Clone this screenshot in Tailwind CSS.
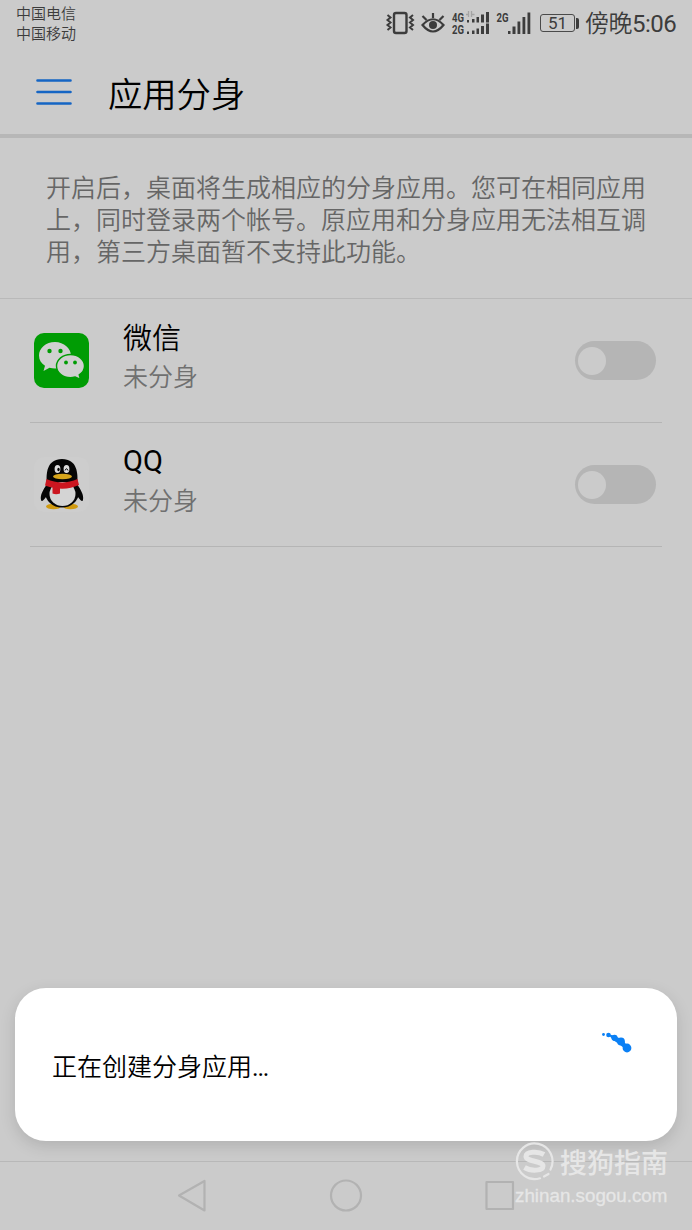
<!DOCTYPE html>
<html lang="zh-CN">
<head>
  <meta charset="utf-8"/>
  <title>应用分身</title>
  <script src="https://cdn.jsdelivr.net/npm/@tailwindcss/browser@4"></script>
  <style>
    body { font-family: Roboto, 'Noto Sans CJK SC', sans-serif; }
  </style>
</head>
<body class="bg-[#cbcbcb]">
  <div class="relative flex flex-col w-[692px] h-[1230px] overflow-hidden text-black">

    <!-- Status bar -->
    <div class="flex justify-between h-12 pl-4 pr-[15px] text-[#3c3c3c]">
      <div class="pt-1 text-[15px] leading-5 font-[350]">
        <p>中国电信</p>
        <p>中国移动</p>
      </div>
      <div class="flex items-center">
        <svg class="w-[154px] h-12" viewBox="384 0 154 48" fill="none" stroke="#3c3c3c">
          <rect x="394" y="13" width="12.5" height="20" rx="2" stroke-width="2.4"/>
          <path d="M387.5 15l3 2.5-3 2.5 3 2.5-3 2.5 3 2.5-3 2.5M413 15l-3 2.5 3 2.5-3 2.5 3 2.5-3 2.5 3 2.5" stroke-width="2"/>
          <path d="M422.500 25q10.500-11.500 21 0q-10.500 13-21 0zM433 18v-5M426.500 20l-4-4M439.500 20l4-4" stroke-width="2.200"/>
          <circle cx="433" cy="25" r="4" fill="#3c3c3c" stroke="none"/>
          <g fill="#3c3c3c" stroke="none">
            <path d="M467 20h2v2.500h-2zM472 19h2.500v3.500h-2.500zM476.500 17h2.500v5.500h-2.500zM481 14.500h3v8h-3zM486 12h3v10.500h-3z"/>
            <path d="M467 31.500h2v2.500h-2zM472 30.500h2.500v3.500h-2.500zM476.500 28.500h2.500v5.500h-2.500zM481 26h3v8h-3zM486 23.500h3v10.500h-3z"/>
            <path d="M508 31h2.500v3h-2.500zM512.500 26.500h3v7.500h-3zM517.500 21.500h2.800v12.500h-2.800zM522.500 17h2.800v17h-2.800zM527.500 12.500h2.800v21.500h-2.800z"/>
            <g font-family="Roboto" font-weight="700" font-size="12.500">
              <text x="452" y="22" textLength="12" lengthAdjust="spacingAndGlyphs">4G</text>
              <text x="452" y="34" textLength="12" lengthAdjust="spacingAndGlyphs">2G</text>
              <text x="496.500" y="21.500" textLength="12" lengthAdjust="spacingAndGlyphs">2G</text>
            </g>
          </g>
          <path d="M466 14.500h3M468.500 11v6M471.500 11v6M471.500 14.500h3" stroke="#a4a4a4" stroke-width="1.300"/>
        </svg>
        <div class="flex items-center ml-0.5 -mt-[2px]">
          <span class="w-[35px] h-[18px] rounded-[3px] border border-[#4a4a4a] text-[17px] leading-[17px] text-center">51</span>
          <span class="w-[3px] h-[11px] ml-px rounded-r-xs bg-[#3c3c3c]"></span>
        </div>
        <span class="w-[92px] ml-[6px] text-[24px] tracking-[-0.5px] font-[350] whitespace-nowrap">傍晚<span class="font-normal">5:06</span></span>
      </div>
    </div>

    <!-- Title bar -->
    <div class="flex items-center h-[90px] pl-9 pt-0.5 border-b-4 border-[#b7b7b7]">
      <svg class="w-9 h-7" viewBox="0 0 36 28" stroke="#1565c4" stroke-width="2.600" stroke-linecap="round">
        <path d="M1.500 2.500h33M1.500 14h33M1.500 25.500h33"/>
      </svg>
      <h1 class="ml-9 pt-[6px] text-[34.3px] leading-none font-[350]">应用分身</h1>
    </div>

    <!-- Description -->
    <p class="h-[161px] pt-[35px] pl-[46px] pr-[44px] border-b border-[#b9b9b9] text-[25px] leading-8 font-[350] text-[#666]">开启后，桌面将生成相应的分身应用。您可在相同应用<br/>上，同时登录两个帐号。原应用和分身应用无法相互调<br/>用，第三方桌面暂不支持此功能。</p>

    <!-- App list -->
    <ul class="mx-[30px]">
      <li class="flex items-center h-[124px] pl-1 pr-[6px] border-b border-[#b5b5b5]">
        <svg class="w-[55px] h-[55px]" viewBox="0 0 55 55">
          <rect width="55" height="55" rx="10" fill="#009c04"/>
          <path d="M21 9C12 9 5 15 5 22.500c0 4.500 2.300 8 6 10.300L9.500 38l6-3.300c1.800.5 3.500.8 5.500.8 9 0 16-6 16-13S30 9 21 9z" fill="#d0d0d0"/>
          <path d="M36.500 21.500c-7.800 0-14 5.200-14 11.600s6.200 11.600 14 11.600c1.600 0 3.200-.3 4.700-.7l5.300 2.500-1.300-4.600c3.300-2.100 5.300-5.300 5.300-8.800 0-6.400-6.200-11.600-14-11.600z" fill="#d0d0d0" stroke="#009c04" stroke-width="1.400"/>
          <g fill="#009c04">
            <circle cx="15.500" cy="18" r="2.200"/><circle cx="26.500" cy="18" r="2.200"/>
            <circle cx="32" cy="29.500" r="1.900"/><circle cx="41" cy="29.500" r="1.900"/>
          </g>
        </svg>
        <div class="ml-[34px] flex-1 pb-[5px]">
          <p class="text-[29px] leading-10 font-[350]">微信</p>
          <p class="text-[25px] leading-[38px] font-[350] text-[#707070]">未分身</p>
        </div>
        <span class="flex items-center w-[81px] h-[39px] pl-[3px] rounded-full bg-[#b5b5b5]"><i class="size-7 rounded-full bg-[#cbcbcb]"></i></span>
      </li>
      <li class="flex items-center h-[124px] pl-1 pr-[6px] border-b border-[#b5b5b5]">
        <svg class="w-[55px] h-[55px]" viewBox="0 0 55 55">
          <rect width="55" height="55" rx="10" fill="#cdcdcd"/>
          <ellipse cx="19.500" cy="49.500" rx="7.500" ry="2.800" fill="#d09a10"/>
          <ellipse cx="36.500" cy="49.500" rx="7.500" ry="2.800" fill="#d09a10"/>
          <path d="M13 27c-4 6-7 11-6 16 .5 2.500 3 0 5-3zM43 27c4 6 7 11 6 16-.5 2.500-3 0-5-3z" fill="#050505"/>
          <ellipse cx="28" cy="35" rx="17" ry="15.500" fill="#050505"/>
          <path d="M13 29c-1.500-13 0-27 15-27s16.500 14 15 27z" fill="#050505"/>
          <ellipse cx="28.500" cy="37" rx="13" ry="12" fill="#d4d4d4"/>
          <path d="M12.500 22c10 4.500 21 4.500 31 0l1.500 6c-10 4.500-21 5-34 .5z" fill="#cb1620"/>
          <path d="M18.500 28h7.500v8.500q-4 1.500-7.500 0z" fill="#cb1620"/>
          <ellipse cx="23.500" cy="12" rx="2.900" ry="4" fill="#ddd"/>
          <ellipse cx="32.500" cy="12" rx="2.900" ry="4" fill="#ddd"/>
          <ellipse cx="24.500" cy="12.500" rx="1.200" ry="1.800"/>
          <path d="M31 13.500q1.500-3.500 3 0" fill="none" stroke="#000"/>
          <ellipse cx="28.500" cy="19.500" rx="9.500" ry="2.800" fill="#d6a51b"/>
        </svg>
        <div class="ml-[34px] flex-1 pb-[5px]">
          <p class="text-[29px] leading-10 relative -top-0.5">QQ</p>
          <p class="text-[25px] leading-[38px] font-[350] text-[#707070]">未分身</p>
        </div>
        <span class="flex items-center w-[81px] h-[39px] pl-[3px] rounded-full bg-[#b5b5b5]"><i class="size-7 rounded-full bg-[#cbcbcb]"></i></span>
      </li>
    </ul>

    <!-- Navigation bar -->
    <div class="mt-auto h-[69px] border-t border-[#b8b8b8]">
      <svg class="w-full h-[68px]" viewBox="0 1162 692 68" fill="none" stroke="#b2b2b2" stroke-width="2.200" stroke-linejoin="round">
        <path d="M179 1195.500L204.500 1181v29.500z"/>
        <circle cx="346" cy="1195.500" r="15"/>
        <rect x="486.500" y="1182" width="26.500" height="27"/>
      </svg>
    </div>

    <!-- Progress dialog -->
    <div class="absolute left-[15px] top-[988px] flex items-center w-[662px] h-[153px] pl-[37px] pr-[45px] rounded-[31px] bg-white shadow-[0_5px_16px_rgba(0,0,0,0.13)]">
      <p class="flex-1 pt-[6px] text-[25px] leading-8 font-[350]">正在创建分身应用<span class="font-normal tracking-[-1.2px]">...</span></p>
      <svg class="w-8 h-6 -mt-[46px]" viewBox="600 1030 32 24" fill="#0b80f5">
        <circle cx="603.500" cy="1034.500" r="1.400"/>
        <circle cx="608.500" cy="1035" r="2.300"/>
        <circle cx="614.500" cy="1037.800" r="3.100"/>
        <circle cx="621" cy="1041.500" r="3.900"/>
        <circle cx="627" cy="1048" r="4.400"/>
        <path d="M608 1034l7 2 8 4 5 7-3 2-6-5-6-4z"/>
      </svg>
    </div>

    <!-- Watermark -->
    <div class="absolute left-[515px] top-[1142px] w-[170px] text-[#e6e6e6]">
      <div class="flex items-center h-[38px]">
        <svg class="w-[39px] h-[39px]" viewBox="0 0 39 39" fill="none" stroke="#e6e6e6" stroke-linecap="round">
          <path d="M25 36.300A17.800 17.800 0 1 1 35.500 27.500" stroke-width="2.200"/>
          <path d="M29 12.500C23 9 11 9.500 11 14.500c0 5 17 4.500 17 9.500 0 5-12 5.500-18.500 1.500" stroke-width="5" stroke-linecap="butt"/>
          <path d="M29 34.500l4.500-2.500" stroke-width="2.200"/>
        </svg>
        <span class="ml-[6px] pt-1.5 text-[27px] leading-none font-medium whitespace-nowrap">搜狗指南</span>
      </div>
      <p class="pt-px text-[18.800px] leading-[30px] font-['Liberation_Sans'] [-webkit-text-stroke:0.3px] whitespace-nowrap">zhinan.sogou.com</p>
    </div>
  </div>
</body>
</html>
